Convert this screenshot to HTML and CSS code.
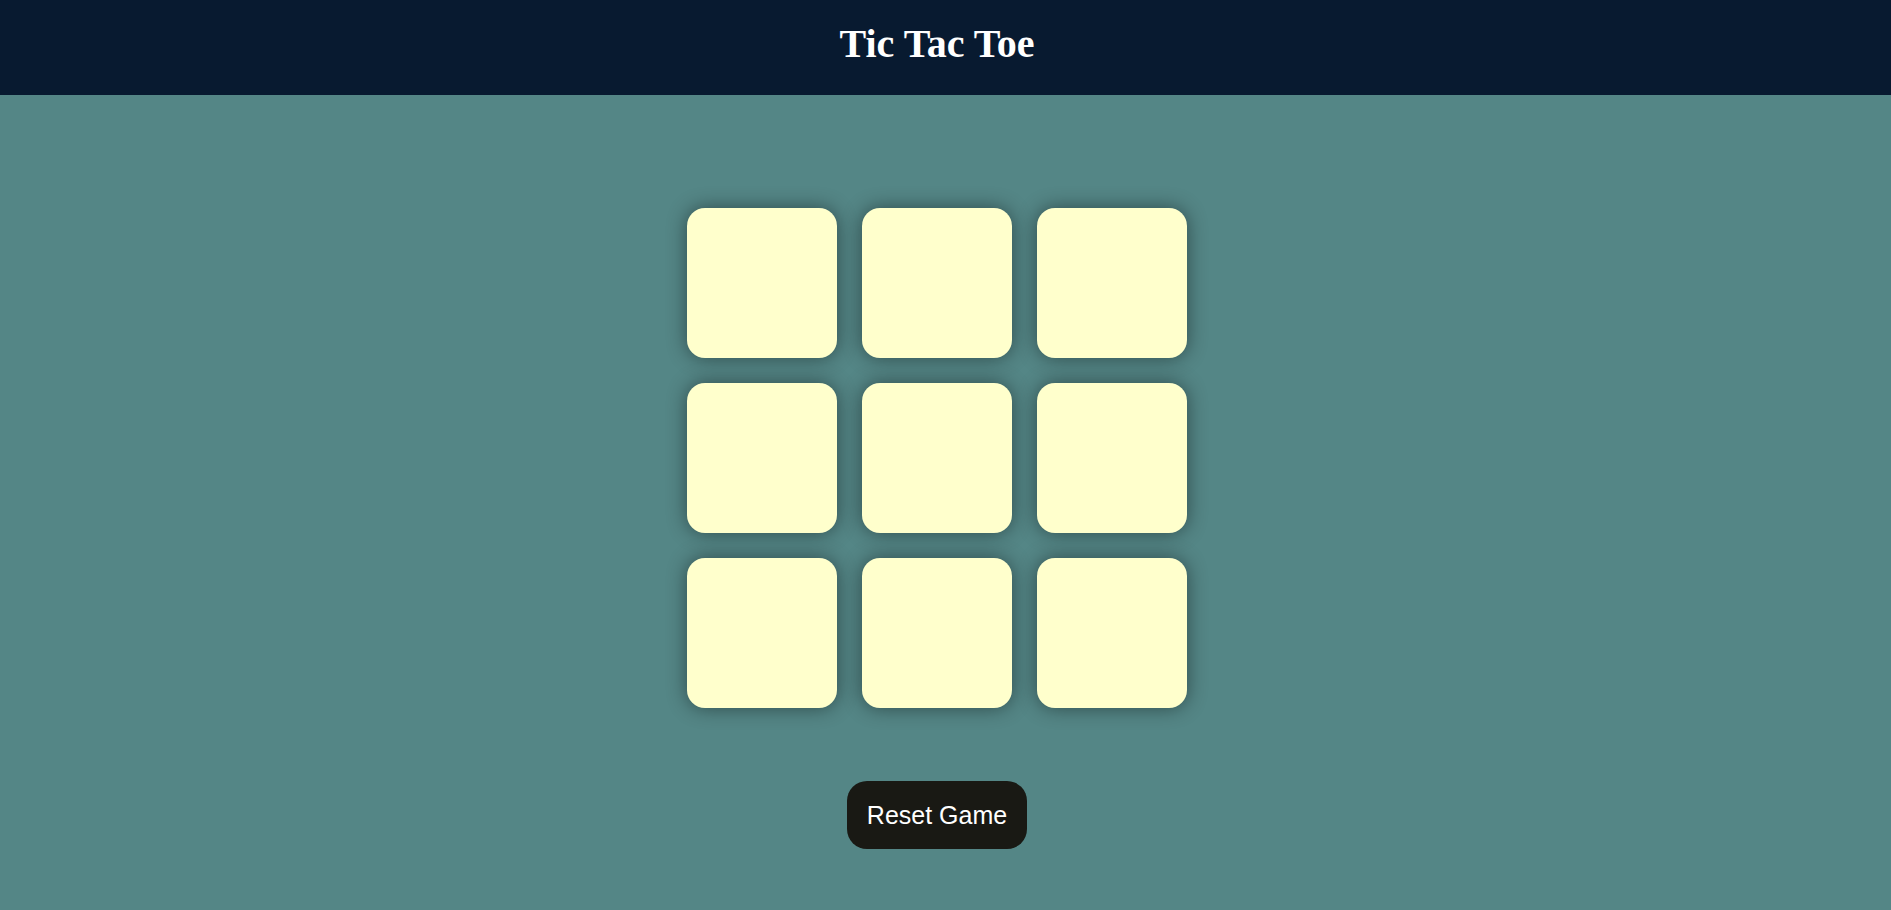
FILE: index.html
```html
<!DOCTYPE html>
<html lang="en">
<head>
<meta charset="UTF-8">
<title>Tic Tac Toe</title>
<link rel="stylesheet" href="styles.css">
</head>
<body>
<header class="top">
  <h1 class="title">Tic Tac Toe</h1>
</header>
<main class="game">
  <div class="board">
    <button class="cell"></button>
    <button class="cell"></button>
    <button class="cell"></button>
    <button class="cell"></button>
    <button class="cell"></button>
    <button class="cell"></button>
    <button class="cell"></button>
    <button class="cell"></button>
    <button class="cell"></button>
  </div>
  <button class="reset">Reset Game</button>
</main>
</body>
</html>
```
FILE: styles.css
```css
html, body {
  margin: 0;
  padding: 0;
  height: 100%;
}
body {
  background: #548686;
  font-family: "Liberation Serif", "Times New Roman", serif;
}
.top {
  background: #081a30;
  height: 95px;
  display: flex;
  align-items: center;
  justify-content: center;
  padding-right: 17px;
}
.title {
  margin: 0;
  color: #ffffff;
  font-size: 40px;
  font-weight: bold;
  line-height: 1;
  padding-bottom: 7px;
}
.game {
  display: flex;
  flex-direction: column;
  align-items: center;
  padding-top: 113px;
  padding-right: 17px;
}
.board {
  display: grid;
  grid-template-columns: repeat(3, 150px);
  grid-auto-rows: 150px;
  gap: 25px;
}
.cell {
  border: none;
  border-radius: 18px;
  background: #ffffcc;
  box-shadow: 0 0 20px rgba(0, 0, 0, 0.45);
  padding: 0;
}
.reset {
  margin-top: 73px;
  background: #191914;
  color: #ffffff;
  border: none;
  border-radius: 20px;
  padding: 20px;
  font-family: "Liberation Sans", Arial, sans-serif;
  font-size: 25px;
  line-height: 28px;
}
```
